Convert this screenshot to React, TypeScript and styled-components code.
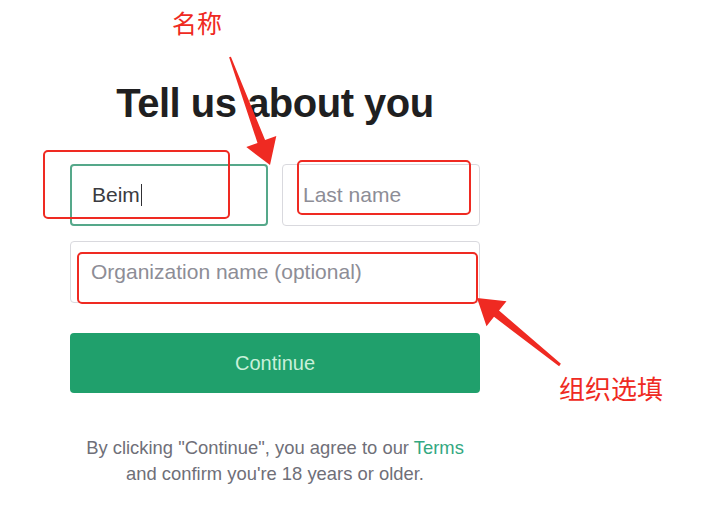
import styled, { createGlobalStyle } from 'styled-components'

const GlobalStyle = createGlobalStyle`
  html, body {
    margin: 0;
    padding: 0;
    background: #ffffff;
  }
  body {
    font-family: "Liberation Sans", Arial, sans-serif;
    -webkit-font-smoothing: antialiased;
  }
`

const theme = {
  green: '#20a06c',
  greenText: '#c9f0da',
  link: '#33a881',
  ink: '#1f1f21',
  border: '#d9d9de',
  placeholder: '#8d8d96',
  muted: '#6f6f78',
  mark: '#ef2a22',
}

const Page = styled.div`
  position: relative;
  width: 708px;
  height: 512px;
  overflow: hidden;
  background: #fff;
`

const Form = styled.div`
  width: 410px;
  margin-left: 70px;
  padding-top: 79px;
  display: flex;
  flex-direction: column;
`

const Title = styled.h1`
  margin: 0 0 37px;
  font-size: 40px;
  line-height: 48px;
  font-weight: 700;
  letter-spacing: -0.5px;
  text-align: center;
  color: ${theme.ink};
`

const Row = styled.div`
  display: grid;
  grid-template-columns: 1fr 1fr;
  gap: 14px;
`

const Field = styled.div<{ $focused?: boolean }>`
  box-sizing: border-box;
  height: 62px;
  display: flex;
  align-items: center;
  padding: 0 20px;
  border: ${(p) => (p.$focused ? `2px solid #55a88a` : `1.5px solid ${theme.border}`)};
  border-radius: 4px;
  font-size: 21px;
  color: #3b3b40;
`

const Placeholder = styled.span`
  color: ${theme.placeholder};
`

const Caret = styled.span`
  display: inline-block;
  width: 1.5px;
  height: 22px;
  margin-left: 1px;
  background: #303034;
`

const Stack = styled.div`
  display: flex;
  flex-direction: column;
  gap: 15px;
`

const ContinueButton = styled.button`
  margin-top: 30px;
  height: 60px;
  border: none;
  border-radius: 4px;
  background: ${theme.green};
  color: ${theme.greenText};
  font-family: "Liberation Sans", Arial, sans-serif;
  font-size: 20px;
  cursor: pointer;
`

const Legal = styled.p`
  margin: 42px -30px 0;
  text-align: center;
  font-size: 18.4px;
  line-height: 26px;
  color: ${theme.muted};
`

const TermsLink = styled.a`
  color: ${theme.link};
  text-decoration: none;
`

const MarkBox = styled.div<{ $x: number; $y: number; $w: number; $h: number }>`
  position: absolute;
  left: ${(p) => p.$x}px;
  top: ${(p) => p.$y}px;
  width: ${(p) => p.$w}px;
  height: ${(p) => p.$h}px;
  box-sizing: border-box;
  border: 2.5px solid ${theme.mark};
  border-radius: 5px;
  pointer-events: none;
`

const MarkLabel = styled.div<{ $x: number; $y: number; $size: number }>`
  position: absolute;
  left: ${(p) => p.$x}px;
  top: ${(p) => p.$y}px;
  font-family: "Noto Sans CJK SC", "Noto Sans", sans-serif;
  font-size: ${(p) => p.$size}px;
  line-height: 1;
  color: ${theme.mark};
  white-space: nowrap;
`

const ArrowLayer = styled.svg`
  position: absolute;
  inset: 0;
  pointer-events: none;
`

export default function App() {
  return (
    <Page>
      <GlobalStyle />
      <Form>
        <Title>Tell us about you</Title>
        <Stack>
          <Row>
            <Field $focused>
              <span>Beim</span>
              <Caret />
            </Field>
            <Field>
              <Placeholder>Last name</Placeholder>
            </Field>
          </Row>
          <Field>
            <Placeholder>Organization name (optional)</Placeholder>
          </Field>
        </Stack>
        <ContinueButton>Continue</ContinueButton>
        <Legal>
          By clicking "Continue", you agree to our <TermsLink>Terms</TermsLink>
          <br />
          and confirm you're 18 years or older.
        </Legal>
      </Form>

      {/* annotations drawn over the form */}
      <MarkBox $x={43} $y={150} $w={187} $h={69} />
      <MarkBox $x={297} $y={160} $w={174} $h={55} />
      <MarkBox $x={77} $y={252} $w={401} $h={52} />
      <MarkLabel $x={172} $y={10} $size={25}>名称</MarkLabel>
      <MarkLabel $x={559} $y={375} $size={26}>组织选填</MarkLabel>
      <ArrowLayer width="708" height="512" viewBox="0 0 708 512">
        <polygon
          fill={theme.mark}
          points="229.1,57.3 257.5,142.9 246.3,147.1 270,165 276.3,135.9 265.1,140.1 230.9,56.7"
        />
        <polygon
          fill={theme.mark}
          points="559.1,366.2 494,316.8 486.5,326.2 477,298 506.5,301.2 499,310.6 560.9,363.8"
        />
      </ArrowLayer>
    </Page>
  )
}
